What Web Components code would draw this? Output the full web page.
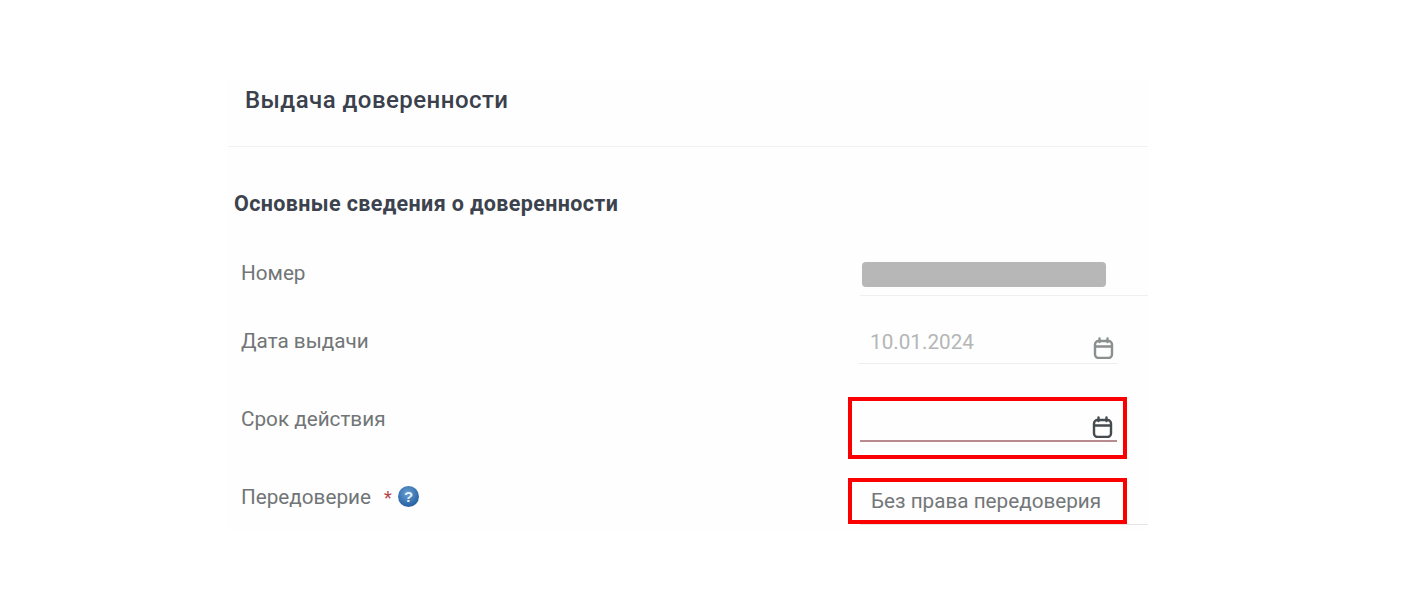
<!DOCTYPE html>
<html lang="ru">
  <head>
    <meta charset="UTF-8" />
    <title>Выдача доверенности</title>
    <style>
      body {
        margin: 0;
        background: #fff;
        font-family: Roboto, "Liberation Sans", sans-serif;
      }
      .req {
        margin-left: 13px;
        color: #b8454a;
        font-size: 18px;
      }
    </style>
  </head>
  <body>
    <poa-panel title-text="Выдача доверенности" section="Основные сведения о доверенности">
      <poa-row height="46" label-top="10">
        <span slot="label">Номер</span>
        <masked-field></masked-field>
      </poa-row>
      <poa-row height="68" label-top="32">
        <span slot="label">Дата выдачи</span>
        <date-field value="10.01.2024"></date-field>
      </poa-row>
      <poa-row height="114" label-top="42">
        <span slot="label">Срок действия</span>
        <mark-box top="33" height="62"><date-field active></date-field></mark-box>
      </poa-row>
      <poa-row height="53" label-top="6">
        <span slot="label">Передоверие<span class="req">*</span><help-icon></help-icon></span>
        <mark-box top="0" height="46"><text-field value="Без права передоверия"></text-field></mark-box>
      </poa-row>
    </poa-panel>

    <script>
      class PoaPanel extends HTMLElement {
        constructor() {
          super();
          this.attachShadow({ mode: "open" });
          this.shadowRoot.innerHTML = `
            <style>
              :host {
                display: block;
                width: 920px;
                margin: 80px 0 0 228px;
                background: #fdfefd;
              }
              header {
                height: 67px;
                box-sizing: border-box;
                padding: 5px 0 0 17px;
                border-bottom: 1px solid #f0f2f2;
                font-size: 24px;
                line-height: 30px;
                font-weight: 500;
                color: #3a404c;
                letter-spacing: 0.46px;
              }
              h2 {
                margin: 0;
                height: 103px;
                box-sizing: border-box;
                padding: 44px 0 0 6px;
                font-size: 21.5px;
                line-height: 26px;
                font-weight: 700;
                color: #3c424e;
                letter-spacing: 0.36px;
              }
            </style>
            <header></header>
            <h2></h2>
            <slot></slot>
          `;
          this.shadowRoot.querySelector("header").textContent = this.getAttribute("title-text");
          this.shadowRoot.querySelector("h2").textContent = this.getAttribute("section");
        }
      }

      class PoaRow extends HTMLElement {
        constructor() {
          super();
          this.attachShadow({ mode: "open" });
          this.shadowRoot.innerHTML = `
            <style>
              :host {
                display: grid;
                grid-template-columns: 620px 300px;
                font-size: 20.7px;
                line-height: 26px;
                color: #717577;
              }
              .label {
                padding-left: 13px;
              }
            </style>
            <div class="label"><slot name="label"></slot></div>
            <div class="field"><slot></slot></div>
          `;
          this.style.height = this.getAttribute("height") + "px";
          this.shadowRoot.querySelector(".label").style.paddingTop = this.getAttribute("label-top") + "px";
        }
      }

      // красная рамка-пометка вокруг поля
      class MarkBox extends HTMLElement {
        constructor() {
          super();
          this.attachShadow({ mode: "open" });
          this.shadowRoot.innerHTML = `
            <style>
              :host {
                display: block;
                position: relative;
                width: 279px;
                box-sizing: border-box;
              }
              .box {
                position: absolute;
                inset: 0;
                border: 4px solid #fb0000;
                pointer-events: none;
              }
            </style>
            <slot></slot>
            <div class="box"></div>
          `;
          this.style.marginTop = this.getAttribute("top") + "px";
          this.style.height = this.getAttribute("height") + "px";
        }
      }

      class MaskedField extends HTMLElement {
        constructor() {
          super();
          this.attachShadow({ mode: "open" });
          this.shadowRoot.innerHTML = `
            <style>
              :host {
                display: block;
                box-sizing: border-box;
                height: 46px;
                margin-left: 12px;
                padding: 12px 0 0 2px;
                border-bottom: 1px solid #eef0f0;
              }
              div {
                width: 244px;
                height: 25px;
                border-radius: 4px;
                background: #b7b7b7;
              }
            </style>
            <div></div>
          `;
        }
      }

      class DateField extends HTMLElement {
        constructor() {
          super();
          this.attachShadow({ mode: "open" });
          const active = this.hasAttribute("active");
          this.shadowRoot.innerHTML = `
            <style>
              :host {
                display: block;
                box-sizing: border-box;
                position: relative;
              }
              .line {
                box-sizing: border-box;
                display: flex;
                justify-content: space-between;
                margin-left: ${active ? 12 : 10}px;
                width: ${active ? 257 : 260}px;
                height: ${active ? 45 : 68}px;
                padding: ${active ? "19px" : "33px"} 4px 0 ${active ? 0 : 12}px;
                border-bottom: ${active ? "2px solid #b98a90" : "1px solid #eef0f0"};
                font-size: 20.7px;
                line-height: 26px;
                color: #b4b6b7;
              }
              svg {
                width: 21px;
                height: 22px;
                margin-top: ${active ? 0 : 8}px;
                color: ${active ? "#454b4f" : "#8b8f90"};
              }
            </style>
            <div class="line">
              <span></span>
              <svg viewBox="0 0 21 22" fill="none" stroke="currentColor" stroke-width="2.4" stroke-linecap="round">
                <rect x="2" y="4" width="17" height="17" rx="3.5" />
                <path d="M2.5 9.5H18.5M6.5 1.5V5M14.5 1.5V5" />
              </svg>
            </div>
          `;
          this.shadowRoot.querySelector("span").textContent = this.getAttribute("value") || "";
        }
      }

      class TextField extends HTMLElement {
        constructor() {
          super();
          this.attachShadow({ mode: "open" });
          this.shadowRoot.innerHTML = `
            <style>
              :host {
                display: block;
                position: relative;
                width: 288px;
                height: 47px;
                box-sizing: border-box;
                margin-left: 12px;
                padding: 10px 0 0 11px;
                border-bottom: 1px solid #e4e6e6;
                font-size: 20.7px;
                line-height: 26px;
                color: #737779;
                white-space: nowrap;
              }
            </style>
            <span></span>
          `;
          this.shadowRoot.querySelector("span").textContent = this.getAttribute("value");
        }
      }

      class HelpIcon extends HTMLElement {
        constructor() {
          super();
          this.attachShadow({ mode: "open" });
          this.shadowRoot.innerHTML = `
            <style>
              :host {
                display: inline-block;
                width: 21px;
                height: 21px;
                margin-left: 6px;
                vertical-align: -3px;
              }
              svg {
                display: block;
              }
              text {
                font-family: "Liberation Sans", sans-serif;
                font-size: 15px;
                font-weight: 700;
                fill: #e6f2fb;
              }
            </style>
            <svg width="21" height="21" viewBox="0 0 21 21">
              <defs>
                <radialGradient id="g" cx="45%" cy="35%" r="70%">
                  <stop offset="0" stop-color="#6a9fd4" />
                  <stop offset="1" stop-color="#1e5a9c" />
                </radialGradient>
              </defs>
              <circle cx="10.5" cy="10.5" r="10.5" fill="url(#g)" />
              <text x="10.5" y="16" text-anchor="middle">?</text>
            </svg>
          `;
        }
      }

      customElements.define("poa-panel", PoaPanel);
      customElements.define("poa-row", PoaRow);
      customElements.define("mark-box", MarkBox);
      customElements.define("masked-field", MaskedField);
      customElements.define("date-field", DateField);
      customElements.define("text-field", TextField);
      customElements.define("help-icon", HelpIcon);
    </script>
  </body>
</html>
